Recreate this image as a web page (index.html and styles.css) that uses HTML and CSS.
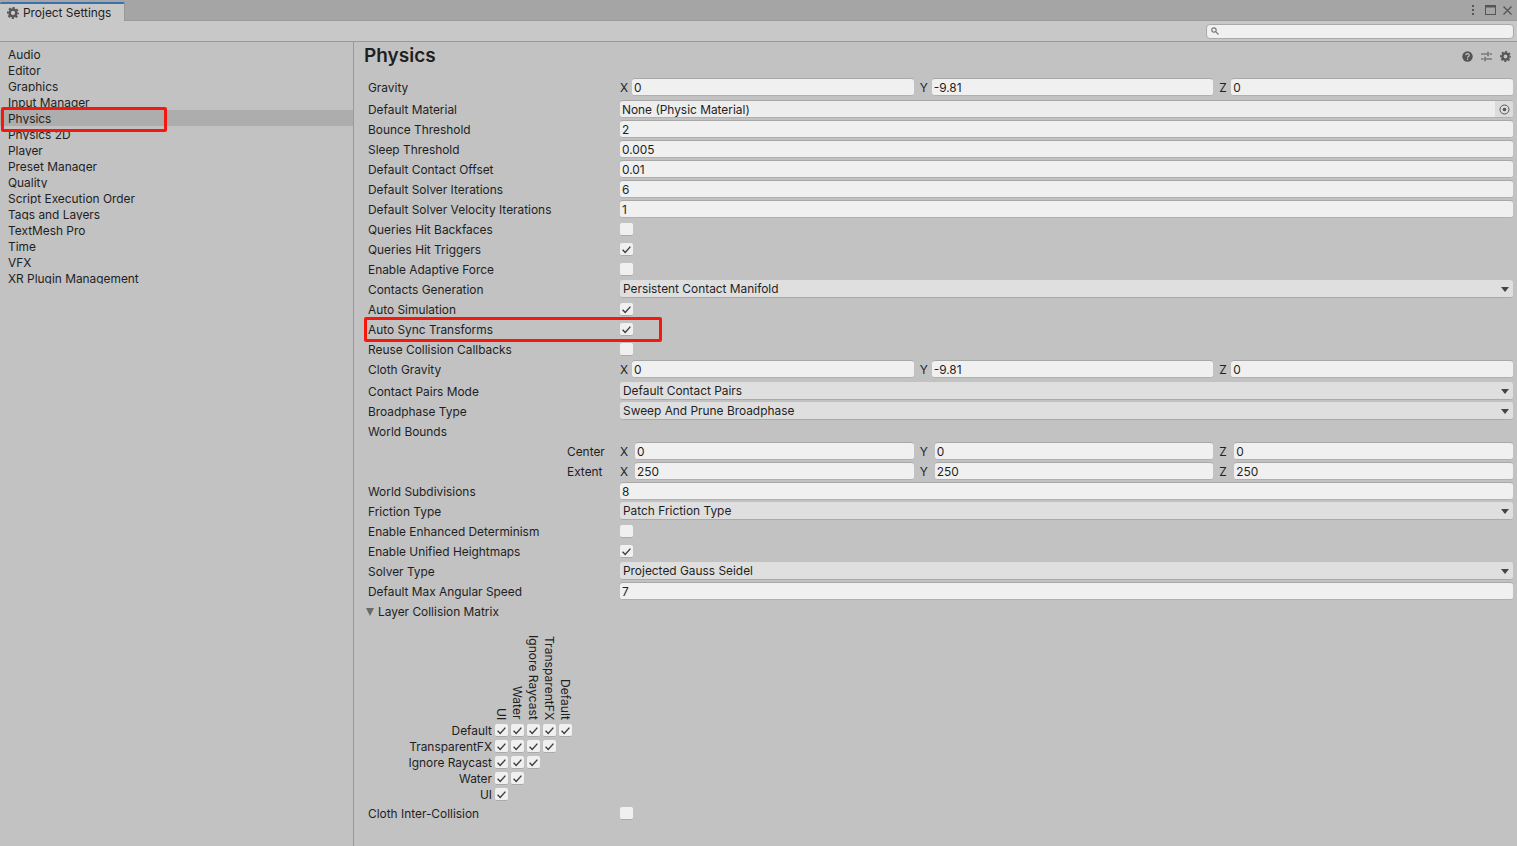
FILE: index.html
```html
<!DOCTYPE html>
<html lang="en">
<head>
  <meta charset="UTF-8">
  <title>Project Settings</title>
  <link rel="stylesheet" href="styles.css">
</head>
<body>
  <svg class="defs" width="0" height="0">
    <symbol id="check" viewBox="0 0 13 13"><path d="M2.600 6.800 5.200 9.400 10.400 3.600" fill="none" stroke="#3c3c3c" stroke-width="1.400"/></symbol>
    <symbol id="gear" viewBox="0 0 24 24">
      <circle cx="12" cy="12" r="6.800" fill="none" stroke="#555" stroke-width="5"/>
      <circle cx="12" cy="12" r="10.300" fill="none" stroke="#555" stroke-width="3.400" stroke-dasharray="4.400 3.690" stroke-dashoffset="2.200"/>
    </symbol>
  </svg>

  <header class="titlebar">
    <div class="tab">
      <svg class="tab-gear"><use href="#gear"/></svg>
      <span>Project Settings</span>
    </div>
    <div class="window-btns">
      <svg class="kebab" width="4" height="12" viewBox="0 0 4 12" fill="#555"><rect x="1" y="1" width="2" height="2"/><rect x="1" y="5" width="2" height="2"/><rect x="1" y="9" width="2" height="2"/></svg>
      <svg width="11" height="10" viewBox="0 0 11 10" fill="none" stroke="#555"><rect x=".5" y=".5" width="10" height="9"/><path d="M0 1.500h11" stroke-width="2"/></svg>
      <svg width="9" height="9" viewBox="0 0 9 9" fill="none" stroke="#555" stroke-width="1.300"><path d="M.5.500l8 8M8.500.500l-8 8"/></svg>
    </div>
  </header>

  <div class="toolbar">
    <div class="search">
      <svg width="8" height="8" viewBox="0 0 8 8" fill="none" stroke="#777" stroke-width="1.200"><circle cx="3" cy="3" r="2.200"/><path d="M4.700 4.700 7.500 7.500"/></svg>
    </div>
  </div>

  <div class="layout">
    <nav class="sidebar">
      <div class="nav-item"><span>Audio</span></div>
      <div class="nav-item"><span>Editor</span></div>
      <div class="nav-item"><span>Graphics</span></div>
      <div class="nav-item"><span>Input Manager</span></div>
      <div class="nav-item active"><span>Physics</span></div>
      <div class="nav-item"><span>Physics 2D</span></div>
      <div class="nav-item"><span>Player</span></div>
      <div class="nav-item"><span>Preset Manager</span></div>
      <div class="nav-item"><span>Quality</span></div>
      <div class="nav-item"><span>Script Execution Order</span></div>
      <div class="nav-item"><span>Tags and Layers</span></div>
      <div class="nav-item"><span>TextMesh Pro</span></div>
      <div class="nav-item"><span>Time</span></div>
      <div class="nav-item"><span>VFX</span></div>
      <div class="nav-item"><span>XR Plugin Management</span></div>
    </nav>

    <main class="content">
      <div class="page-head">
        <h1>Physics</h1>
        <div class="head-icons">
          <svg width="11" height="11" viewBox="0 0 11 11"><circle cx="5.500" cy="5.500" r="5.200" fill="#555"/><path d="M3.800 4.200a1.700 1.600 0 1 1 2.600 1.400c-.6.400-.9.600-.9 1.200" fill="none" stroke="#c2c2c2" stroke-width="1.200"/><rect x="4.900" y="7.600" width="1.200" height="1.300" fill="#c2c2c2"/></svg>
          <svg width="11" height="11" viewBox="0 0 11 11" stroke="#555" stroke-width="1.200"><path d="M0 3h6M8.500 3H11M7 .8v4.400M0 8h2.500M5 8h6M4 5.800v4.400"/></svg>
          <svg class="head-gear"><use href="#gear"/></svg>
        </div>
      </div>

      <div class="row row-gap">
        <label>Gravity</label>
        <div class="vector">
          <div class="axis"><span>X</span><div class="field">0</div></div>
          <div class="axis"><span>Y</span><div class="field">-9.81</div></div>
          <div class="axis"><span>Z</span><div class="field">0</div></div>
        </div>
      </div>
      <div class="row">
        <label>Default Material</label>
        <div class="field object">None (Physic Material)<span class="target"><svg width="11" height="11" viewBox="0 0 11 11"><circle cx="5.500" cy="5.500" r="4.500" fill="none" stroke="#555"/><circle cx="5.500" cy="5.500" r="1.800" fill="#555"/></svg></span></div>
      </div>
      <div class="row"><label>Bounce Threshold</label><div class="field">2</div></div>
      <div class="row"><label>Sleep Threshold</label><div class="field">0.005</div></div>
      <div class="row"><label>Default Contact Offset</label><div class="field">0.01</div></div>
      <div class="row"><label>Default Solver Iterations</label><div class="field">6</div></div>
      <div class="row"><label>Default Solver Velocity Iterations</label><div class="field">1</div></div>
      <div class="row"><label>Queries Hit Backfaces</label><span class="check"></span></div>
      <div class="row"><label>Queries Hit Triggers</label><span class="check"><svg><use href="#check"/></svg></span></div>
      <div class="row"><label>Enable Adaptive Force</label><span class="check"></span></div>
      <div class="row"><label>Contacts Generation</label><div class="dropdown">Persistent Contact Manifold</div></div>
      <div class="row"><label>Auto Simulation</label><span class="check"><svg><use href="#check"/></svg></span></div>
      <div class="row"><label>Auto Sync Transforms</label><span class="check"><svg><use href="#check"/></svg></span></div>
      <div class="row"><label>Reuse Collision Callbacks</label><span class="check"></span></div>
      <div class="row row-gap">
        <label>Cloth Gravity</label>
        <div class="vector">
          <div class="axis"><span>X</span><div class="field">0</div></div>
          <div class="axis"><span>Y</span><div class="field">-9.81</div></div>
          <div class="axis"><span>Z</span><div class="field">0</div></div>
        </div>
      </div>
      <div class="row"><label>Contact Pairs Mode</label><div class="dropdown">Default Contact Pairs</div></div>
      <div class="row"><label>Broadphase Type</label><div class="dropdown">Sweep And Prune Broadphase</div></div>
      <div class="row"><label>World Bounds</label></div>
      <div class="row">
        <label class="sub-label">Center</label>
        <div class="vector wide">
          <div class="axis"><span>X</span><div class="field">0</div></div>
          <div class="axis"><span>Y</span><div class="field">0</div></div>
          <div class="axis"><span>Z</span><div class="field">0</div></div>
        </div>
      </div>
      <div class="row">
        <label class="sub-label">Extent</label>
        <div class="vector wide">
          <div class="axis"><span>X</span><div class="field">250</div></div>
          <div class="axis"><span>Y</span><div class="field">250</div></div>
          <div class="axis"><span>Z</span><div class="field">250</div></div>
        </div>
      </div>
      <div class="row"><label>World Subdivisions</label><div class="field">8</div></div>
      <div class="row"><label>Friction Type</label><div class="dropdown">Patch Friction Type</div></div>
      <div class="row"><label>Enable Enhanced Determinism</label><span class="check"></span></div>
      <div class="row"><label>Enable Unified Heightmaps</label><span class="check"><svg><use href="#check"/></svg></span></div>
      <div class="row"><label>Solver Type</label><div class="dropdown">Projected Gauss Seidel</div></div>
      <div class="row"><label>Default Max Angular Speed</label><div class="field">7</div></div>
      <div class="row foldout"><i class="fold-arrow"></i><label>Layer Collision Matrix</label></div>

      <div class="matrix">
        <span></span>
        <span class="col-name">UI</span>
        <span class="col-name">Water</span>
        <span class="col-name">Ignore Raycast</span>
        <span class="col-name">TransparentFX</span>
        <span class="col-name">Default</span>

        <span class="row-name">Default</span>
        <span class="check"><svg><use href="#check"/></svg></span>
        <span class="check"><svg><use href="#check"/></svg></span>
        <span class="check"><svg><use href="#check"/></svg></span>
        <span class="check"><svg><use href="#check"/></svg></span>
        <span class="check"><svg><use href="#check"/></svg></span>

        <span class="row-name">TransparentFX</span>
        <span class="check"><svg><use href="#check"/></svg></span>
        <span class="check"><svg><use href="#check"/></svg></span>
        <span class="check"><svg><use href="#check"/></svg></span>
        <span class="check"><svg><use href="#check"/></svg></span>
        <span></span>

        <span class="row-name">Ignore Raycast</span>
        <span class="check"><svg><use href="#check"/></svg></span>
        <span class="check"><svg><use href="#check"/></svg></span>
        <span class="check"><svg><use href="#check"/></svg></span>
        <span></span><span></span>

        <span class="row-name">Water</span>
        <span class="check"><svg><use href="#check"/></svg></span>
        <span class="check"><svg><use href="#check"/></svg></span>
        <span></span><span></span><span></span>

        <span class="row-name">UI</span>
        <span class="check"><svg><use href="#check"/></svg></span>
        <span></span><span></span><span></span><span></span>
      </div>

      <div class="row"><label>Cloth Inter-Collision</label><span class="check"></span></div>
    </main>
  </div>

  <div class="callout callout-nav"></div>
  <div class="callout callout-sync"></div>
</body>
</html>
```

FILE: styles.css
```css
html, body {
  height: 100%;
}

body {
  margin: 0;
  display: flex;
  flex-direction: column;
  overflow: hidden;
  background-color: #c2c2c2;
  color: #1f1f1f;
  font-family: Inter, "Noto Sans", sans-serif;
  font-size: 11.9px;
  line-height: 16px;
}

.defs {
  position: absolute;
}

.titlebar {
  flex: none;
  height: 20px;
  display: flex;
  justify-content: space-between;
  background-color: #a5a5a5;
  border-bottom: 1px solid #999;
}

.tab {
  width: 125px;
  height: 19px;
  margin-top: 2px;
  padding-left: 7px;
  box-sizing: border-box;
  display: flex;
  align-items: center;
  gap: 4px;
  background-color: #c8c8c8;
  border-top: 2px solid #3a72b0;
  border-right: 1px solid #999;
  border-radius: 2px 2px 0 0;
}

.tab-gear {
  width: 12px;
  height: 12px;
}

.window-btns {
  display: flex;
  align-items: center;
  gap: 7px;
  padding-right: 5px;
}

.kebab {
  margin-right: 3px;
}

.toolbar {
  flex: none;
  height: 20px;
  display: flex;
  justify-content: flex-end;
  align-items: center;
  padding-right: 3px;
  background-color: #c8c8c8;
  border-bottom: 1px solid #999;
}

.search {
  width: 308px;
  height: 15px;
  padding-left: 4px;
  box-sizing: border-box;
  display: flex;
  align-items: center;
  background-color: #f0f0f0;
  border: 1px solid #aaa;
  border-radius: 4px;
}

.layout {
  flex: 1;
  display: flex;
  min-height: 0;
}

.sidebar {
  flex: none;
  width: 353px;
  padding-top: 4px;
  border-right: 1px solid #999;
}

.nav-item {
  height: 16px;
  padding: 1px 0 0 8px;
  box-sizing: border-box;
}

/* the list clips its descenders, same as the editor does */
.nav-item span {
  display: block;
  height: 13px;
  overflow: hidden;
}

.nav-item.active {
  background-color: #adadad;
}

.content {
  flex: 1;
  padding-right: 4px;
}

.page-head {
  height: 35px;
  padding: 0 2px 0 10px;
  display: flex;
  justify-content: space-between;
  align-items: center;
}

h1 {
  margin: 0 0 8px;
  font-size: 19px;
  font-weight: 600;
  line-height: 24px;
}

.head-icons {
  display: flex;
  align-items: center;
  gap: 8px;
  margin-bottom: 6px;
}

.head-gear {
  width: 11px;
  height: 11px;
}

.row {
  height: 20px;
  padding-left: 14px;
  display: flex;
  align-items: center;
}

.row-gap {
  margin-bottom: 2px;
}

.row label {
  flex: none;
  width: 252px;
  padding-top: 2px;
}

.row .sub-label {
  padding-left: 199px;
  width: 53px;
}

.field {
  flex: 1;
  min-width: 0;
  height: 18px;
  padding-left: 2px;
  box-sizing: border-box;
  line-height: 18px;
  background-color: #f0f0f0;
  border-top: 1px solid #a8a8a8;
  border-bottom: 1px solid #b0b0b0;
  border-radius: 3px;
}

.object {
  display: flex;
  justify-content: space-between;
  overflow: hidden;
  padding-right: 0;
  background-color: #ededed;
}

.target {
  width: 18px;
  display: flex;
  align-items: center;
  justify-content: center;
  background-color: #dcdcdc;
}

.vector {
  flex: 1;
  display: flex;
  gap: 6px;
}

.axis {
  flex: 1;
  display: flex;
  align-items: center;
}

.axis span {
  flex: none;
  width: 12px;
  padding-top: 2px;
}

.wide .axis span {
  width: 15px;
}

.dropdown {
  flex: 1;
  position: relative;
  height: 18px;
  padding-left: 3px;
  box-sizing: border-box;
  line-height: 18px;
  background-color: #dfdfdf;
  border-bottom: 1px solid #aaa;
  border-radius: 3px;
}

.dropdown::after {
  content: "";
  position: absolute;
  right: 4px;
  top: 7px;
  border-left: 4px solid transparent;
  border-right: 4px solid transparent;
  border-top: 5px solid #444;
}

.check {
  flex: none;
  width: 13px;
  height: 13px;
  background-color: #f0f0f0;
  border-bottom: 1px solid #aaa;
  border-radius: 2px;
  box-sizing: border-box;
}

.check svg {
  display: block;
  width: 13px;
  height: 13px;
}

.foldout {
  padding-left: 12px;
}

.fold-arrow {
  flex: none;
  margin: 1px 4px 0 0;
  border-left: 4.500px solid transparent;
  border-right: 4.500px solid transparent;
  border-top: 8px solid #6a6a6a;
}

.matrix {
  height: 182px;
  padding-left: 14px;
  display: grid;
  grid-template-columns: 126px repeat(5, 16px);
  grid-template-rows: 101px repeat(5, 16px);
  align-content: start;
  align-items: center;
}

.col-name {
  align-self: end;
  justify-self: center;
  margin-right: 2px;
  padding-bottom: 2px;
  writing-mode: vertical-rl;
  text-orientation: sideways;
  white-space: nowrap;
  font-size: 12.1px;
  line-height: 16px;
}

.row-name {
  padding: 2px 2px 0 0;
  text-align: right;
}

.matrix .check {
  margin-left: 1px;
}

.callout {
  position: absolute;
  box-sizing: border-box;
  border: 3px solid #f5180c;
  border-radius: 2px;
}

.callout-nav {
  left: 1px;
  top: 107px;
  width: 166px;
  height: 25px;
}

.callout-sync {
  left: 364px;
  top: 317px;
  width: 298px;
  height: 25px;
}
```
